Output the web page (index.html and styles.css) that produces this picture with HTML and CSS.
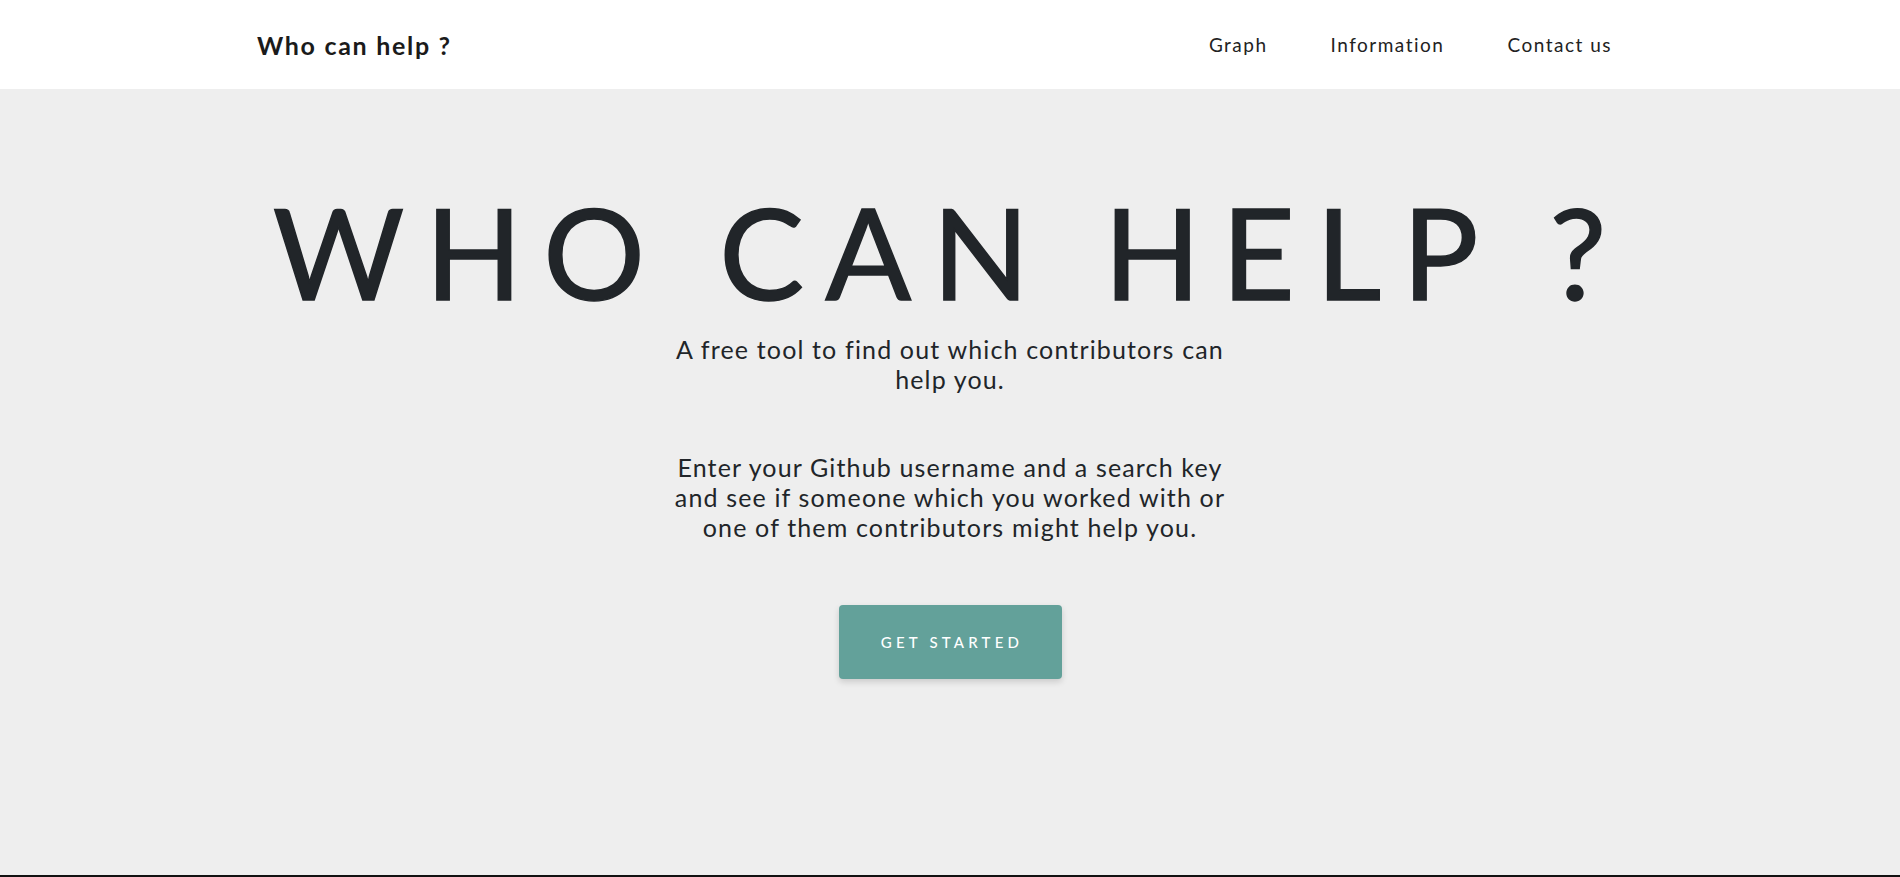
FILE: index.html
```html
<!DOCTYPE html>
<html lang="en">
<head>
<meta charset="utf-8">
<title>Who can help ?</title>
<link rel="stylesheet" href="styles.css">
</head>
<body>
<header class="navbar">
  <a class="brand" href="#">Who can help ?</a>
  <nav class="nav-links">
    <a href="#">Graph</a>
    <a href="#">Information</a>
    <a href="#">Contact us</a>
  </nav>
</header>
<main class="hero">
  <h1 class="hero-title">WHO CAN HELP ?</h1>
  <p class="hero-lead">A free tool to find out which contributors can help you.</p>
  <p class="hero-text">Enter your Github username and a search key and see if someone which you worked with or one of them contributors might help you.</p>
  <a class="btn-start" href="#">GET STARTED</a>
</main>
<div class="next-section"></div>
</body>
</html>
```

FILE: styles.css
```css
* { box-sizing: border-box; }
html, body { margin: 0; padding: 0; }
body {
  font-family: "Lato", "Open Sans", sans-serif;
  color: #212529;
  background: #eeeeee;
  height: 877px;
  overflow: hidden;
  display: flex;
  flex-direction: column;
}
a { text-decoration: none; color: inherit; }

.navbar {
  height: 89px;
  background: #ffffff;
  display: flex;
  align-items: center;
  justify-content: space-between;
  padding: 0 288px 0 257px;
  flex-shrink: 0;
}
.brand {
  font-weight: 700;
  font-size: 25px;
  color: #1b1b1b;
  letter-spacing: 1.7px;
}
.nav-links {
  display: flex;
  gap: 63px;
}
.nav-links a {
  font-size: 19px;
  color: #222;
  letter-spacing: 1.5px;
}

.hero {
  flex: 1;
  display: flex;
  flex-direction: column;
  align-items: center;
  text-align: center;
  padding-top: 99px;
}
.hero-title {
  margin: 0;
  font-weight: 400;
  font-size: 127px;
  line-height: 1;
  letter-spacing: 21px;
  color: #212529;
  -webkit-text-stroke: 1.5px #212529;
}
.hero-lead, .hero-text {
  margin: 0;
  max-width: 575px;
  font-size: 25px;
  line-height: 30px;
  letter-spacing: 1.15px;
}
.hero-lead { margin-top: 19px; }
.hero-text { margin-top: 58px; }
.btn-start {
  margin-top: 63px;
  width: 223px;
  height: 74px;
  display: flex;
  align-items: center;
  justify-content: center;
  background: #63a19a;
  color: #ffffff;
  border-radius: 4px;
  font-size: 15px;
  font-weight: 500;
  letter-spacing: 4.2px;
  padding-left: 4px;
  box-shadow: 0 3px 6px rgba(0,0,0,0.15);
}
.next-section {
  height: 2px;
  background: #111;
  flex-shrink: 0;
}
```
